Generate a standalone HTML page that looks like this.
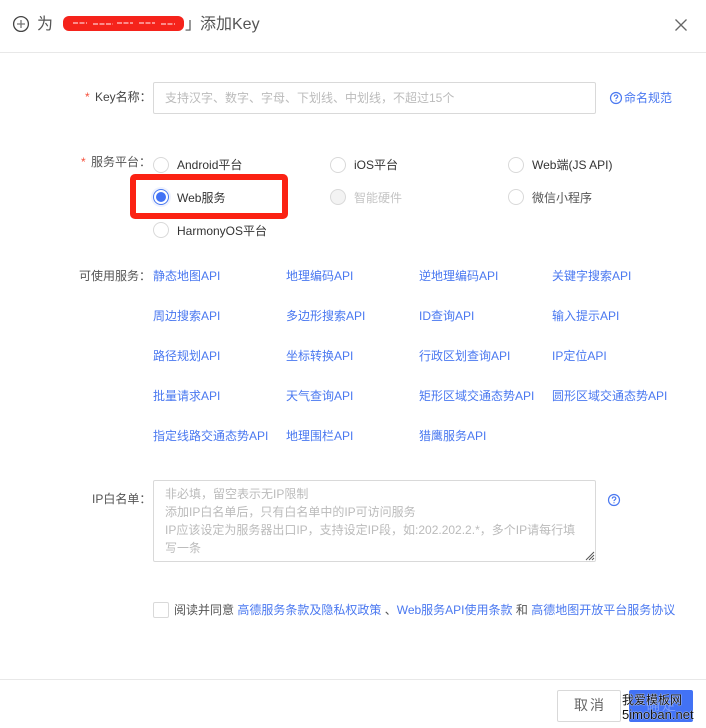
<!DOCTYPE html>
<html lang="zh">
<head>
<meta charset="utf-8">
<title>添加Key</title>
<style>
html,body{margin:0;padding:0;background:#fff}
#p{position:relative;width:706px;height:728px;overflow:hidden;background:#fff;font-family:"Liberation Sans","Noto Sans CJK SC",sans-serif;font-size:12px;color:#555}
#p>*{position:absolute}
.t{white-space:nowrap;line-height:16px;height:16px}
.a{color:#4a78f0;white-space:nowrap;line-height:16px;height:16px}
.r{width:14px;height:14px;border:1px solid #d9d9d9;border-radius:50%;background:#fff}
.l{color:#333}
.line{left:0;width:706px;height:1px;background:#e8e8e8}
.s{color:#f5503c}
</style>
</head>
<body>
<div id="p">
<svg style="left:12px;top:15px" width="18" height="18" viewBox="0 0 18 18" fill="none" stroke="#444" stroke-width="1.3"><circle cx="9" cy="9" r="7.4"/><path d="M5 9h8M9 5v8" stroke="#777"/></svg>
<div class="t" style="left:37px;top:16px;font-size:16px;line-height:18px;height:18px;color:#555">为</div>
<div style="left:63px;top:16px;width:121px;height:15px;background:#f5231b;border-radius:6px"></div>
<svg style="left:63px;top:16px" width="121" height="15"><path d="M10 7h14M30 8h20M54 7h16M76 7h16M98 8h14" stroke="#fcc" stroke-width="1.2" stroke-dasharray="5 1.5"/></svg>
<div class="t" style="left:185px;top:16px;font-size:16px;line-height:18px;height:18px;color:#555">」</div>
<div class="t" style="left:200px;top:16px;font-size:16px;line-height:18px;height:18px;color:#555">添加Key</div>
<svg style="left:674px;top:18px" width="14" height="14" viewBox="0 0 14 14"><path d="M1.5 1.5l11 11M12.5 1.5l-11 11" stroke="#666" stroke-width="1.3" fill="none"/></svg>
<div class="line" style="top:52px"></div>

<div class="t s" style="left:85px;top:89px">*</div>
<div class="t" style="left:95px;top:89px;color:#444">Key名称：</div>
<div style="left:153px;top:82px;width:441px;height:30px;border:1px solid #d9d9d9;border-radius:2px"></div>
<div class="t" style="left:165px;top:90px;color:#bbb">支持汉字、数字、字母、下划线、中划线，不超过15个</div>
<svg style="left:609px;top:91px" width="14" height="14" viewBox="0 0 14 14" fill="none" stroke="#4a78f0" stroke-width="1.2"><circle cx="7" cy="7" r="5.5"/><path d="M5.3 5.6c0-2.2 3.5-2.2 3.5-.1 0 1.2-1.8 1.3-1.8 2.6M7 9.2v1"/></svg>
<div class="a" style="left:624px;top:90px">命名规范</div>

<div class="t s" style="left:81px;top:154px">*</div>
<div class="t" style="left:91px;top:154px;color:#555">服务平台：</div>
<div class="r" style="left:153px;top:157px"></div><div class="t l" style="left:177px;top:157px">Android平台</div>
<div class="r" style="left:330px;top:157px"></div><div class="t l" style="left:354px;top:157px">iOS平台</div>
<div class="r" style="left:508px;top:157px"></div><div class="t l" style="left:532px;top:157px">Web端(JS API)</div>
<div style="left:151px;top:187px;width:20px;height:20px;border-radius:50%;background:#eef2fe"></div>
<div style="left:153px;top:189px;width:14px;height:14px;border:1px solid #4a78f0;border-radius:50%;background:#fff"></div>
<div style="left:156px;top:192px;width:10px;height:10px;border-radius:50%;background:#4272f5"></div>
<div class="t l" style="left:177px;top:190px">Web服务</div>
<div class="r" style="left:330px;top:189px;background:#f3f3f3"></div><div class="t" style="left:354px;top:190px;color:#c4c4c4">智能硬件</div>
<div class="r" style="left:508px;top:189px"></div><div class="t" style="left:532px;top:190px;color:#555">微信小程序</div>
<div class="r" style="left:153px;top:222px"></div><div class="t l" style="left:177px;top:223px">HarmonyOS平台</div>
<div style="left:130px;top:174px;width:146px;height:33px;border:6px solid #fb2213;border-radius:5px"></div>

<div class="t" style="left:79px;top:268px;color:#555">可使用服务：</div>
<div class="a" style="left:153px;top:268px">静态地图API</div><div class="a" style="left:286px;top:268px">地理编码API</div><div class="a" style="left:419px;top:268px">逆地理编码API</div><div class="a" style="left:552px;top:268px">关键字搜索API</div>
<div class="a" style="left:153px;top:308px">周边搜索API</div><div class="a" style="left:286px;top:308px">多边形搜索API</div><div class="a" style="left:419px;top:308px">ID查询API</div><div class="a" style="left:552px;top:308px">输入提示API</div>
<div class="a" style="left:153px;top:348px">路径规划API</div><div class="a" style="left:286px;top:348px">坐标转换API</div><div class="a" style="left:419px;top:348px">行政区划查询API</div><div class="a" style="left:552px;top:348px">IP定位API</div>
<div class="a" style="left:153px;top:388px">批量请求API</div><div class="a" style="left:286px;top:388px">天气查询API</div><div class="a" style="left:419px;top:388px">矩形区域交通态势API</div><div class="a" style="left:552px;top:388px">圆形区域交通态势API</div>
<div class="a" style="left:153px;top:428px">指定线路交通态势API</div><div class="a" style="left:286px;top:428px">地理围栏API</div><div class="a" style="left:419px;top:428px">猎鹰服务API</div>

<div class="t" style="left:92px;top:491px;color:#555">IP白名单：</div>
<div style="left:153px;top:480px;width:441px;height:80px;border:1px solid #d9d9d9;border-radius:2px"></div>
<div style="left:165px;top:485px;width:425px;color:#bbb;line-height:18px">非必填，留空表示无IP限制<br>添加IP白名单后，只有白名单中的IP可访问服务<br>IP应该设定为服务器出口IP，支持设定IP段，如:202.202.2.*，多个IP请每行填<br>写一条</div>
<svg style="left:585px;top:551px" width="10" height="10"><path d="M1 9l8-8M4 9l5-5M7 9l2-2" stroke="#555" stroke-width="1" fill="none"/></svg>
<svg style="left:607px;top:493px" width="14" height="14" viewBox="0 0 14 14" fill="none" stroke="#4a78f0" stroke-width="1.2"><circle cx="7" cy="7" r="5.5"/><path d="M5.3 5.6c0-2.2 3.5-2.2 3.5-.1 0 1.2-1.8 1.3-1.8 2.6M7 9.2v1"/></svg>

<div style="left:153px;top:602px;width:14px;height:14px;border:1px solid #d9d9d9;border-radius:2px"></div>
<div class="t" style="left:174px;top:602px;color:#555">阅读并同意 <span style="color:#4a78f0">高德服务条款及隐私权政策</span> 、<span style="color:#4a78f0">Web服务API使用条款</span> 和 <span style="color:#4a78f0">高德地图开放平台服务协议</span></div>

<div class="line" style="top:679px"></div>
<div style="left:557px;top:690px;width:62px;height:30px;border:1px solid #d9d9d9;border-radius:2px"></div>
<div class="t" style="left:574px;top:697px;font-size:14px;color:#666;letter-spacing:2px">取消</div>
<div style="left:629px;top:690px;width:64px;height:32px;background:#4272f5;border-radius:2px"></div>
<div class="t" style="left:646px;top:697px;font-size:14px;color:rgba(255,255,255,.3);letter-spacing:2px">确定</div>
<div class="t" style="left:622px;top:692px;font-size:12px;color:#111;text-shadow:0 0 1px #fff,0 0 1px #fff">我爱模板网</div>
<div class="t" style="left:622px;top:707px;font-size:13px;color:#111;text-shadow:0 0 1px #fff,0 0 1px #fff">5imoban.net</div>
</div>
</body>
</html>
